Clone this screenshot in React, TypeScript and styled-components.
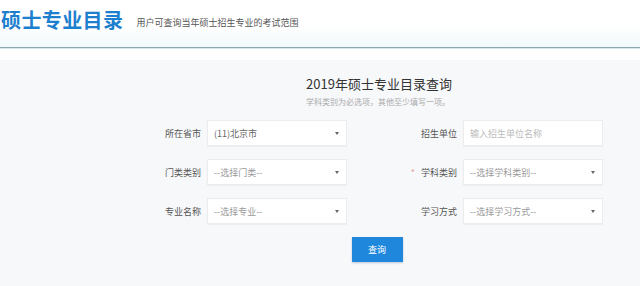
import React from "react";
import styled, { createGlobalStyle } from "styled-components";

const Global = createGlobalStyle`
  html, body { margin: 0; padding: 0; background: #ffffff; }
  body { font-family: "Noto Sans CJK SC", "Noto Sans", sans-serif; }
  * { box-sizing: border-box; }
`;

const Page = styled.div`
  width: 640px;
  height: 286px;
  overflow: hidden;
  display: flex;
  flex-direction: column;
  background: #ffffff;
`;

const Header = styled.header`
  height: 48px;
  display: flex;
  align-items: flex-start;
  gap: 13px;
  padding: 6px 0 0 1px;
  background: linear-gradient(#ffffff 0%, #ffffff 55%, #f1f8fb 100%);
  border-bottom: 1px solid #8ea8b2;
  box-shadow: 0 1px 0 #d6e7ee;
`;

const Title = styled.h1`
  margin: 0;
  font-size: 20px;
  line-height: 28px;
  font-weight: 700;
  color: #1f7fcf;
  letter-spacing: 0.4px;
`;

const Subtitle = styled.span`
  font-size: 9px;
  line-height: 12px;
  margin-top: 11px;
  color: #555;
`;

const Panel = styled.main`
  flex: 1;
  margin-top: 12px;
  background: #f7f8fa;
  display: flex;
  flex-direction: column;
  align-items: center;
  padding-top: 14px;
  padding-left: 112px;
`;

const Heading = styled.h2`
  margin: 0 0 0 6px;
  font-size: 13px;
  line-height: 20px;
  font-weight: 400;
  color: #333;
`;

const Note = styled.p`
  margin: 2px 0 0 4px;
  font-size: 8px;
  line-height: 12px;
  color: #aaa;
`;

const Form = styled.div`
  margin-top: 12px;
  display: grid;
  grid-template-columns: 198px 256px;
  row-gap: 13px;
`;

const Field = styled.div`
  display: flex;
  align-items: center;
`;

const Label = styled.label<{ $w: number }>`
  width: ${(p) => p.$w}px;
  padding-right: 6px;
  text-align: right;
  font-size: 9px;
  color: #555;
  white-space: nowrap;
`;

const Star = styled.span`
  color: #e2a0a0;
  margin-right: 6px;
`;

const Box = styled.div<{ $muted?: boolean }>`
  width: 140px;
  height: 26px;
  background: #fff;
  border: 1px solid #ececec;
  box-shadow: 0 1px 1px rgba(0, 0, 0, 0.04);
  display: flex;
  align-items: center;
  justify-content: space-between;
  padding: 0 7px 0 6px;
  font-size: 9px;
  color: ${(p) => (p.$muted ? "#999" : "#666")};
`;

const Arrow = styled.span`
  width: 0;
  height: 0;
  border-left: 2px solid transparent;
  border-right: 2px solid transparent;
  border-top: 3px solid #666;
`;

const Placeholder = styled.span`
  color: #bbb;
`;

const Button = styled.button`
  margin: 13px 0 0 2px;
  width: 51px;
  height: 25px;
  border: none;
  background: #1f88dd;
  color: #fff;
  font-family: inherit;
  font-size: 9px;
  box-shadow: 0 1px 2px rgba(0, 60, 120, 0.25);
`;

const Select = ({ text, muted }: { text: string; muted?: boolean }) => (
  <Box $muted={muted}>
    <span>{text}</span>
    <Arrow />
  </Box>
);

export default function App() {
  return (
    <>
      <Global />
      <Page>
        <Header>
          <Title>硕士专业目录</Title>
          <Subtitle>用户可查询当年硕士招生专业的考试范围</Subtitle>
        </Header>
        <Panel>
          <Heading>2019年硕士专业目录查询</Heading>
          <Note>学科类别为必选项，其他至少填写一项。</Note>
          <Form>
            <Field>
              <Label $w={58}>所在省市</Label>
              <Select text="(11)北京市" />
            </Field>
            <Field>
              <Label $w={116}>招生单位</Label>
              <Box>
                <Placeholder>输入招生单位名称</Placeholder>
              </Box>
            </Field>
            <Field>
              <Label $w={58}>门类类别</Label>
              <Select text="--选择门类--" muted />
            </Field>
            <Field>
              <Label $w={116}>
                <Star>*</Star>学科类别
              </Label>
              <Select text="--选择学科类别--" muted />
            </Field>
            <Field>
              <Label $w={58}>专业名称</Label>
              <Select text="--选择专业--" muted />
            </Field>
            <Field>
              <Label $w={116}>学习方式</Label>
              <Select text="--选择学习方式--" muted />
            </Field>
          </Form>
          <Button>查询</Button>
        </Panel>
      </Page>
    </>
  );
}
